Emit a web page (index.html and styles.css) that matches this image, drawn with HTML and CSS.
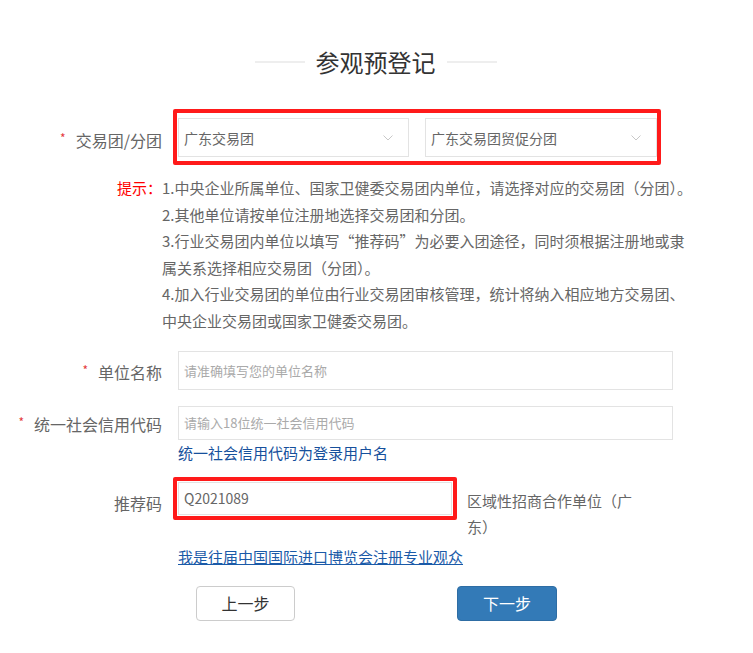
FILE: index.html
```html
<!DOCTYPE html>
<html lang="zh-CN">
<head>
<meta charset="utf-8">
<title>参观预登记</title>
<link rel="stylesheet" href="styles.css">
</head>
<body>
<div class="page">
  <div class="title">
    <span class="title-line"></span>
    <h1 class="title-text">参观预登记</h1>
    <span class="title-line"></span>
  </div>

  <div class="row row-group">
    <div class="label"><span class="req">*</span>交易团/分团</div>
    <div class="highlight highlight-group">
      <div class="select select-a"><span class="select-value">广东交易团</span><svg class="chev" width="10" height="6" viewBox="0 0 10 6"><path d="M0.5 0.5 L5 5 L9.5 0.5" fill="none" stroke="#c8c8c8" stroke-width="1"/></svg></div>
      <div class="select select-b"><span class="select-value">广东交易团贸促分团</span><svg class="chev" width="10" height="6" viewBox="0 0 10 6"><path d="M0.5 0.5 L5 5 L9.5 0.5" fill="none" stroke="#c8c8c8" stroke-width="1"/></svg></div>
    </div>
  </div>

  <div class="tips">
    <div class="tips-label">提示：</div>
    <div class="tips-body">
      <p>1.中央企业所属单位、国家卫健委交易团内单位，请选择对应的交易团（分团）。</p>
      <p>2.其他单位请按单位注册地选择交易团和分团。</p>
      <p>3.行业交易团内单位以填写“推荐码”为必要入团途径，同时须根据注册地或隶属关系选择相应交易团（分团）。</p>
      <p>4.加入行业交易团的单位由行业交易团审核管理，统计将纳入相应地方交易团、中央企业交易团或国家卫健委交易团。</p>
    </div>
  </div>

  <div class="row row-name">
    <div class="label"><span class="req">*</span>单位名称</div>
    <div class="field field-name">请准确填写您的单位名称</div>
  </div>

  <div class="row row-code">
    <div class="label"><span class="req">*</span>统一社会信用代码</div>
    <div class="field field-code">请输入18位统一社会信用代码</div>
  </div>
  <div class="hint">统一社会信用代码为登录用户名</div>

  <div class="row row-ref">
    <div class="label label-ref">推荐码</div>
    <div class="highlight highlight-ref">
      <div class="field field-ref">Q2021089</div>
    </div>
    <div class="ref-note">区域性招商合作单位（广东）</div>
  </div>

  <div class="link-row"><a class="link" href="#">我是往届中国国际进口博览会注册专业观众</a></div>

  <div class="buttons">
    <button class="btn btn-prev" type="button">上一步</button>
    <button class="btn btn-next" type="button">下一步</button>
  </div>
</div>
</body>
</html>
```

FILE: styles.css
```css
* { box-sizing: border-box; }
html, body { margin: 0; padding: 0; background: #fff; }
body {
  font-family: "Noto Sans CJK SC", "Noto Sans", sans-serif;
  color: #666;
}
.page { width: 753px; height: 653px; overflow: hidden; }

.title {
  margin-top: 44px;
  display: flex;
  justify-content: center;
  align-items: center;
  gap: 11px;
  height: 36px;
  padding-right: 2px;
}
.title-line { width: 50px; height: 2px; background: #eeeeee; }
.title-text {
  margin: 0;
  font-size: 24px;
  font-weight: normal;
  line-height: 36px;
  color: #333;
}

.row { display: flex; }
.label {
  width: 162px;
  flex: none;
  text-align: right;
  font-size: 16px;
  line-height: 24px;
  color: #666;
}
.req {
  color: #e4393c;
  font-size: 12px;
  vertical-align: top;
  line-height: 20px;
  margin-right: 10px;
}

.highlight { border: 4px solid #ff1a1a; border-radius: 2px; }

.row-group { margin-top: 29px; align-items: center; }
.row-group .label { padding-top: 6px; }
.highlight-group {
  margin-left: 11px;
  width: 488px;
  padding: 5px 0 4px 1px;
  display: flex;
  gap: 16px;
}
.select {
  height: 39px;
  border: 1px solid #e3e3e3;
  display: flex;
  align-items: center;
  justify-content: space-between;
  padding: 0 15px 0 5px;
  font-size: 14px;
  color: #666;
}
.select-a { width: 231px; }
.select-b { width: 232px; }
.chev { display: block; }

.tips { display: flex; margin-top: 10px; font-size: 15px; line-height: 26.6px; }
.tips-label { width: 162px; flex: none; text-align: right; color: #ff0000; }
.tips-body { width: 536px; color: #666; }
.tips-body p { margin: 0; }

.field {
  border: 1px solid #e3e3e3;
  display: flex;
  align-items: center;
  padding-left: 5px;
  font-size: 13px;
  color: #aaa;
}
.row-name { margin-top: 16px; align-items: center; }
.field-name { margin-left: 16px; width: 495px; height: 39px; }
.row-code { margin-top: 16px; align-items: center; }
.row-code .label, .row-name .label { padding-top: 3px; }
.field-code { margin-left: 16px; width: 495px; height: 34px; }

.hint {
  margin-top: 3px;
  padding-left: 178px;
  font-size: 15px;
  line-height: 20px;
  color: #16509c;
}

.row-ref { margin-top: 14px; align-items: flex-start; }
.label-ref { margin-top: 14px; }
.highlight-ref { margin-left: 11px; width: 284px; padding: 1px; }
.field-ref { width: 274px; height: 33px; font-size: 14px; color: #666; }
.ref-note {
  margin-left: 10px;
  margin-top: 11px;
  width: 172px;
  font-size: 15px;
  line-height: 26px;
  color: #666;
}

.link-row { margin-top: 6px; padding-left: 178px; line-height: 20px; }
.link { font-size: 15px; color: #1a5aa8; text-decoration: underline; }

.buttons { margin-top: 19px; padding-left: 196px; display: flex; }
.btn {
  width: 99px;
  height: 35px;
  border-radius: 4px;
  font-family: inherit;
  font-size: 16px;
  padding: 0;
  cursor: pointer;
}
.btn-prev { background: #fff; border: 1px solid #ccc; color: #333; }
.btn-next { margin-left: 162px; background: #337ab7; border: 1px solid #2e6da4; color: #fff; width: 100px; }
```
